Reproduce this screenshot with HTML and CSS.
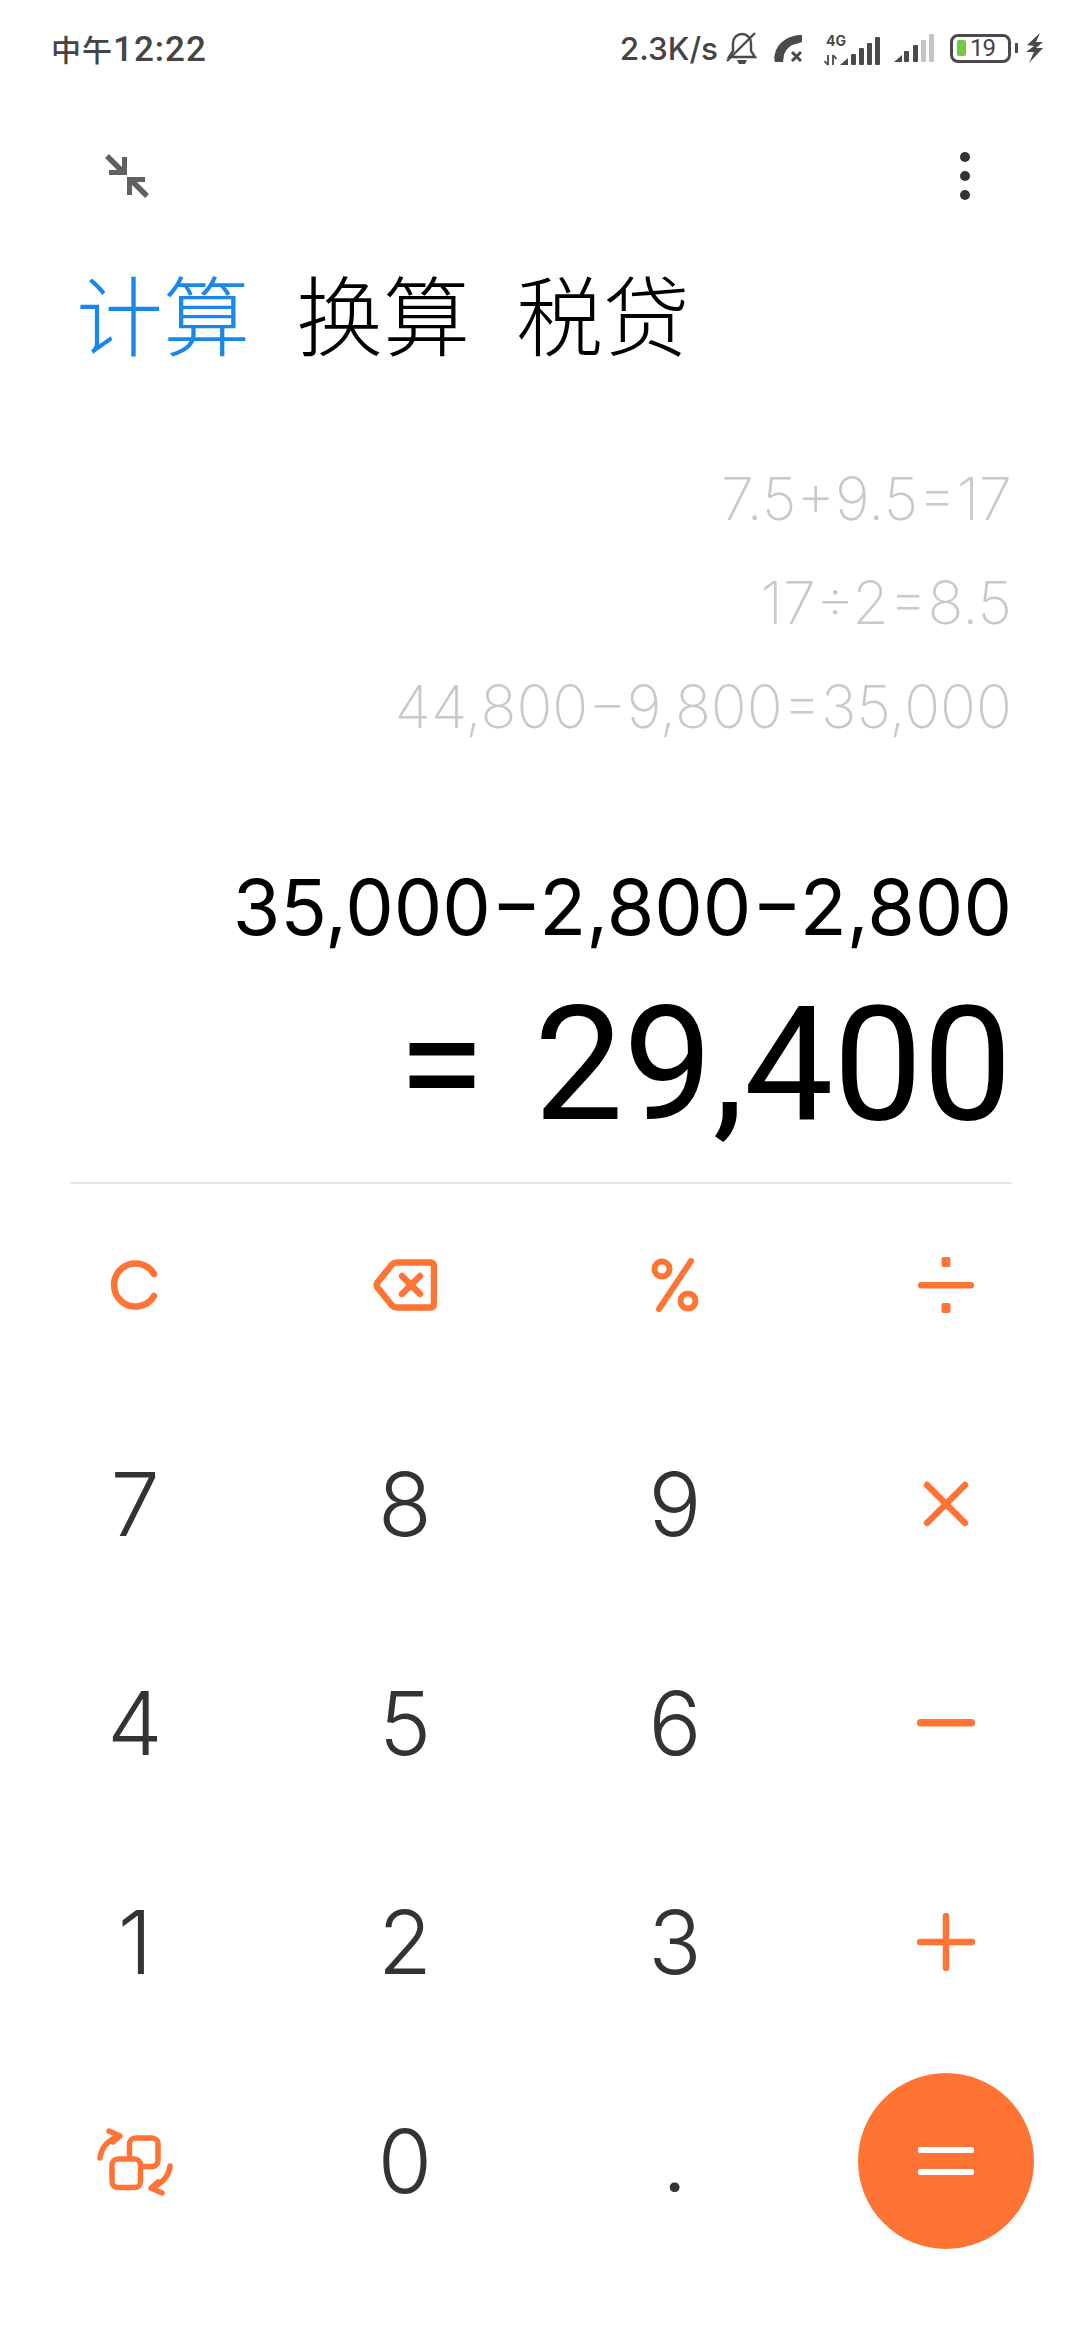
FILE: index.html
```html
<!DOCTYPE html>
<html lang="zh-CN">
<head>
    <meta charset="UTF-8">
    <title>计算器</title>
    <link rel="stylesheet" href="styles.css">
</head>
<body>
<div class="page">

    <div class="status-bar">
        <span class="clock"><span class="clock-cjk">中午</span>12:22</span>
        <div class="status-icons">
            <span class="speed">2.3K/s</span>
            <svg class="ic-bell" width="32" height="34" viewBox="0 0 32 34" fill="none" stroke="#4a4a4a" stroke-width="2.4">
                <path d="M3 26h26l-4-6v-8c0-5-4-9-9-9s-9 4-9 9v8z"/>
                <path d="M1 30L29 2"/>
                <path d="M11 29h10l-2 4h-6z" fill="#4a4a4a" stroke="none"/>
            </svg>
            <svg class="ic-phone" width="28" height="27" viewBox="0 0 28 27" fill="#4a4a4a">
                <path d="M28 0v7l-6 2c-6 1-10 5-12 11l-1 7H1c-1-3-1-6 0-8C3 8 14 0 28 0z"/>
                <path d="M18 17l9 9M27 17l-9 9" stroke="#4a4a4a" stroke-width="3" fill="none"/>
            </svg>
            <svg class="ic-signal" width="57" height="36" viewBox="0 -4 57 36" fill="#4a4a4a">
                <text class="net-label" x="3" y="10">4G</text>
                <path d="M5 19v10M1.500 25l3.500 4M10 29V19M10 19l3.500 4" stroke="#4a4a4a" stroke-width="1.800" fill="none"/>
                <path d="M17 29l8-7v7z"/>
                <rect x="28" y="18" width="5" height="11" rx="1"/>
                <rect x="36" y="12" width="5" height="17" rx="1"/>
                <rect x="44" y="7" width="5" height="22" rx="1"/>
                <rect x="52" y="1" width="5" height="28" rx="1"/>
            </svg>
            <svg class="ic-signal2" width="40" height="28" viewBox="0 1 40 28" fill="#4a4a4a">
                <path d="M0 29l8-7v7z"/>
                <rect x="10" y="18" width="5" height="11" rx="1"/>
                <rect x="19" y="12" width="5" height="17" rx="1"/>
                <rect x="27" y="7" width="5" height="22" rx="1" fill="#c4c4c4"/>
                <rect x="35" y="1" width="5" height="28" rx="1" fill="#c4c4c4"/>
            </svg>
            <div class="battery">
                <span class="battery-fill"></span>
                <span class="battery-num">19</span>
            </div>
            <span class="battery-nub"></span>
            <svg class="ic-bolt" width="19" height="30" viewBox="0 0 19 30" fill="#4a4a4a">
                <path d="M15 0L2 12l7 1-8 6 8 0-5 11 14-15-7 0 7-6-7 0z"/>
            </svg>
        </div>
    </div>

    <div class="toolbar">
        <svg width="44" height="44" viewBox="0 0 44 44" fill="none" stroke="#616161" stroke-width="5.500">
            <path d="M2 2l16 16"/>
            <path d="M4 18.500h15.500V3" stroke-width="5"/>
            <path d="M42 42L26 26"/>
            <path d="M40 25.500H24.500V41" stroke-width="5"/>
        </svg>
        <div class="more-dots">
            <span></span>
            <span></span>
            <span></span>
        </div>
    </div>

    <div class="tabs">
        <span class="tab active">计算</span>
        <span class="tab">换算</span>
        <span class="tab">税贷</span>
    </div>

    <div class="display">
        <div class="history">
            <p>7.5+9.5=17</p>
            <p>17÷2=8.5</p>
            <p>44,800−9,800=35,000</p>
        </div>
        <div class="expression">35,000−2,800−2,800</div>
        <div class="result"><span class="result-eq">=</span>29,400</div>
    </div>

    <div class="keypad">
        <div class="key key-top">
            <svg width="50" height="50" viewBox="0 0 50 50" fill="none" stroke="#ff7335" stroke-width="6.500" stroke-linecap="round">
                <path d="M44 14A21.500 21.500 0 1 0 44 36"/>
            </svg>
        </div>
        <div class="key key-top">
            <svg width="64" height="52" viewBox="0 0 64 52" fill="none" stroke="#ff7335" stroke-width="6.500" stroke-linejoin="round" stroke-linecap="round">
                <path d="M24 3.500H57Q61 3.500 61 7.500V44.500Q61 48.500 57 48.500H24Q21 48.500 19 46.500L4.500 28.500Q3 26 4.500 23.500L19 5.500Q21 3.500 24 3.500z"/>
                <path d="M29 17l18 18M47 17L29 35"/>
            </svg>
        </div>
        <div class="key key-top">
            <svg width="48" height="54" viewBox="0 0 48 54" fill="none" stroke="#ff7335" stroke-width="6" stroke-linecap="round">
                <path d="M40 3L8 51"/>
                <circle cx="11" cy="11" r="7.500"/>
                <circle cx="37" cy="43" r="7.500"/>
            </svg>
        </div>
        <div class="key key-top">
            <svg width="56" height="56" viewBox="0 0 56 56" fill="#ff7335">
                <rect x="0" y="25" width="56" height="6.500" rx="3"/>
                <rect x="23.500" y="0" width="9" height="10" rx="2"/>
                <rect x="23.500" y="46" width="9" height="10" rx="2"/>
            </svg>
        </div>

        <div class="key num">7</div>
        <div class="key num">8</div>
        <div class="key num">9</div>
        <div class="key">
            <svg width="46" height="46" viewBox="0 0 46 46" fill="none" stroke="#ff7335" stroke-width="6.500" stroke-linecap="round">
                <path d="M4 4l38 38M42 4L4 42"/>
            </svg>
        </div>

        <div class="key num">4</div>
        <div class="key num">5</div>
        <div class="key num">6</div>
        <div class="key">
            <svg width="58" height="8" viewBox="0 0 58 8" fill="#ff7335">
                <rect width="58" height="7.500" rx="3.500"/>
            </svg>
        </div>

        <div class="key num">1</div>
        <div class="key num">2</div>
        <div class="key num">3</div>
        <div class="key">
            <svg width="58" height="58" viewBox="0 0 58 58" fill="none" stroke="#ff7335" stroke-width="6.500" stroke-linecap="round">
                <path d="M3 29h52M29 3v52"/>
            </svg>
        </div>

        <div class="key">
            <svg width="110" height="110" viewBox="0 5 110 110" fill="none" stroke="#ff7335" stroke-width="5.500" stroke-linejoin="round" stroke-linecap="round">
                <rect x="49.500" y="37" width="28.500" height="28.500" rx="6"/>
                <rect x="32" y="58" width="28.500" height="28.500" rx="6" fill="#ffffff"/>
                <path d="M20 57Q22 42 37 36"/>
                <path d="M29 30l11 5-7 6"/>
                <path d="M90 65Q88 80 73 86"/>
                <path d="M82 92l-11-5 7-6"/>
            </svg>
        </div>
        <div class="key num">0</div>
        <div class="key num dot">.</div>
        <div class="key">
            <div class="equals">
                <span></span>
                <span></span>
            </div>
        </div>
    </div>

</div>
</body>
</html>
```

FILE: styles.css
```css
html, body {
    margin: 0;
    padding: 0;
    background: #ffffff;
}

.page {
    width: 1080px;
    height: 2340px;
    overflow: hidden;
    display: flex;
    flex-direction: column;
    font-family: Inter, Roboto, "Noto Sans CJK SC", sans-serif;
}

.status-bar {
    height: 96px;
    box-sizing: border-box;
    padding: 0 36px 0 51px;
    display: flex;
    align-items: center;
    justify-content: space-between;
    color: #444444;
}

.clock {
    font-size: 35px;
    font-weight: 500;
    letter-spacing: 1px;
    font-family: Roboto, "Noto Sans CJK SC", sans-serif;
}

.clock-cjk {
    font-size: 30px;
}

.status-icons {
    display: flex;
    align-items: center;
}

.speed {
    font-size: 31.500px;
    font-weight: 500;
    margin-right: 8px;
}

.ic-bell {
    margin-right: 16px;
}

.ic-phone {
    margin-right: 21px;
}

.net-label {
    font-size: 14px;
    font-weight: 700;
    font-family: Inter, sans-serif;
}

.ic-signal {
    margin: 4px 14px 0 0;
}

.ic-signal2 {
    margin-right: 16px;
}

.battery {
    width: 61px;
    height: 29px;
    box-sizing: border-box;
    border: 3px solid #4a4a4a;
    border-radius: 8px;
    display: flex;
    align-items: center;
    padding-left: 4px;
}

.battery-fill {
    width: 9px;
    height: 16px;
    border-radius: 2px;
    background: #76c93a;
    margin-right: 4px;
}

.battery-num {
    font-size: 24px;
    font-weight: 400;
    letter-spacing: -1px;
    font-family: Roboto, sans-serif;
    color: #444444;
}

.battery-nub {
    width: 3px;
    height: 10px;
    background: #4a4a4a;
    margin: 0 7px 0 4px;
}

.toolbar {
    height: 160px;
    box-sizing: border-box;
    padding: 0 110px 0 105px;
    display: flex;
    align-items: center;
    justify-content: space-between;
}

.more-dots {
    display: flex;
    flex-direction: column;
    gap: 9px;
}

.more-dots span {
    width: 10px;
    height: 10px;
    border-radius: 50%;
    background: #333333;
}

.tabs {
    display: flex;
    gap: 46px;
    margin-top: 6px;
    padding-left: 76px;
    font-family: "Noto Sans CJK SC", sans-serif;
    font-size: 87px;
    line-height: 100px;
    font-weight: 300;
    color: #000000;
}

.tab.active {
    color: #1a87ea;
}

.display {
    height: 822px;
    box-sizing: border-box;
    margin: 0 68px 0 70px;
    padding-top: 84px;
    border-bottom: 2px solid #e6e6e6;
    text-align: right;
}

.history {
    font-size: 59.500px;
    font-weight: 200;
    color: #c9c9c9;
    line-height: 104px;
}

.history p {
    margin: 0;
}

.expression {
    margin-top: 94px;
    font-size: 77px;
    font-weight: 400;
    line-height: 110px;
    color: #000000;
}

.result {
    margin-top: 10px;
    font-family: Roboto, sans-serif;
    font-size: 159px;
    font-weight: 400;
    line-height: 186px;
    color: #000000;
}

.result-eq {
    margin-right: 49px;
}

.keypad {
    display: grid;
    grid-template-columns: 270px 270px 270px 272px;
    grid-template-rows: 210px repeat(4, 219px);
}

.key {
    display: flex;
    align-items: center;
    justify-content: center;
}

.key-top {
    padding-bottom: 9px;
}

.num {
    font-size: 88px;
    font-weight: 350;
    color: #333333;
}

.dot {
    font-family: Roboto, sans-serif;
    font-weight: 400;
}

.equals {
    width: 176px;
    height: 176px;
    border-radius: 50%;
    background: #ff7335;
    display: flex;
    flex-direction: column;
    align-items: center;
    justify-content: center;
    gap: 16px;
}

.equals span {
    width: 56px;
    height: 6px;
    border-radius: 2px;
    background: #ffffff;
}
```
